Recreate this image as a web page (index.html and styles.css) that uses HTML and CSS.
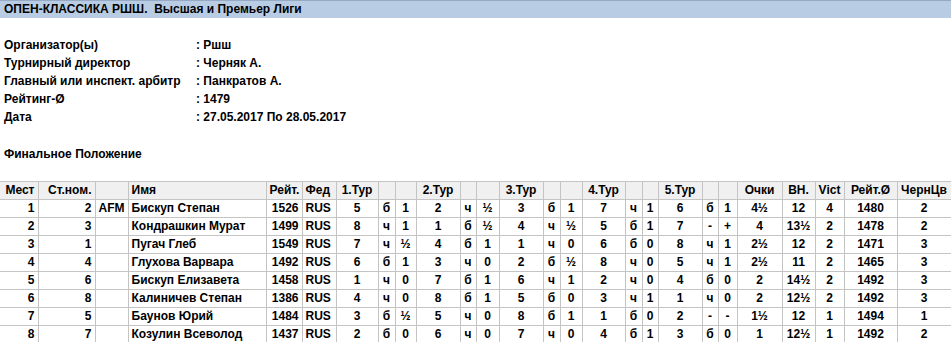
FILE: index.html
```html
<!DOCTYPE html>
<html lang="ru">
<head>
<meta charset="utf-8">
<title>ОПЕН-КЛАССИКА РШШ</title>
<link rel="stylesheet" href="styles.css">
</head>
<body>
<div class="titlebar">ОПЕН-КЛАССИКА РШШ.&nbsp; Высшая и Премьер Лиги</div>
<div class="info">
  <div class="lbl">Организатор(ы)</div><div class="val">: Ршш</div>
  <div class="lbl">Турнирный директор</div><div class="val">: Черняк А.</div>
  <div class="lbl">Главный или инспект. арбитр</div><div class="val">: Панкратов А.</div>
  <div class="lbl">Рейтинг-Ø</div><div class="val">: 1479</div>
  <div class="lbl">Дата</div><div class="val">: 27.05.2017 По 28.05.2017</div>
</div>
<div class="subtitle">Финальное Положение</div>
<table class="standings">
  <colgroup>
    <col style="width:38px"><col style="width:57px"><col style="width:33px"><col style="width:138px"><col style="width:36px"><col style="width:34px">
    <col style="width:42px"><col style="width:17px"><col style="width:21px">
    <col style="width:44px"><col style="width:16px"><col style="width:23px">
    <col style="width:44px"><col style="width:17px"><col style="width:22px">
    <col style="width:43px"><col style="width:17px"><col style="width:16px">
    <col style="width:44px"><col style="width:16px"><col style="width:19px">
    <col style="width:45px"><col style="width:33px"><col style="width:29px"><col style="width:53px"><col style="width:54px">
  </colgroup>
  <thead>
    <tr>
      <th class="r first">Мест</th><th class="r">Ст.ном.</th><th></th><th class="l">Имя</th><th class="r">Рейт.</th><th class="l">Фед</th>
      <th>1.Тур</th><th></th><th></th>
      <th>2.Тур</th><th></th><th></th>
      <th>3.Тур</th><th></th><th></th>
      <th>4.Тур</th><th></th><th></th>
      <th>5.Тур</th><th></th><th></th>
      <th>Очки</th><th>ВН.</th><th>Vict</th><th>Рейт.Ø</th><th>ЧернЦв</th>
    </tr>
  </thead>
  <tbody>
    <tr><td class="r first">1</td><td class="r">2</td><td>AFM</td><td class="l">Бискуп Степан</td><td class="r">1526</td><td class="l">RUS</td>
      <td>5</td><td>б</td><td>1</td><td>2</td><td>ч</td><td>½</td><td>3</td><td>б</td><td>1</td><td>7</td><td>ч</td><td>1</td><td>6</td><td>б</td><td>1</td>
      <td>4½</td><td>12</td><td>4</td><td>1480</td><td>2</td></tr>
    <tr><td class="r first">2</td><td class="r">3</td><td></td><td class="l">Кондрашкин Мурат</td><td class="r">1499</td><td class="l">RUS</td>
      <td>8</td><td>ч</td><td>1</td><td>1</td><td>б</td><td>½</td><td>4</td><td>ч</td><td>½</td><td>5</td><td>б</td><td>1</td><td>7</td><td>-</td><td>+</td>
      <td>4</td><td>13½</td><td>2</td><td>1478</td><td>2</td></tr>
    <tr><td class="r first">3</td><td class="r">1</td><td></td><td class="l">Пугач Глеб</td><td class="r">1549</td><td class="l">RUS</td>
      <td>7</td><td>ч</td><td>½</td><td>4</td><td>б</td><td>1</td><td>1</td><td>ч</td><td>0</td><td>6</td><td>б</td><td>0</td><td>8</td><td>ч</td><td>1</td>
      <td>2½</td><td>12</td><td>2</td><td>1471</td><td>3</td></tr>
    <tr><td class="r first">4</td><td class="r">4</td><td></td><td class="l">Глухова Варвара</td><td class="r">1492</td><td class="l">RUS</td>
      <td>6</td><td>б</td><td>1</td><td>3</td><td>ч</td><td>0</td><td>2</td><td>б</td><td>½</td><td>8</td><td>ч</td><td>0</td><td>5</td><td>ч</td><td>1</td>
      <td>2½</td><td>11</td><td>2</td><td>1465</td><td>3</td></tr>
    <tr><td class="r first">5</td><td class="r">6</td><td></td><td class="l">Бискуп Елизавета</td><td class="r">1458</td><td class="l">RUS</td>
      <td>1</td><td>ч</td><td>0</td><td>7</td><td>б</td><td>1</td><td>6</td><td>ч</td><td>1</td><td>2</td><td>ч</td><td>0</td><td>4</td><td>б</td><td>0</td>
      <td>2</td><td>14½</td><td>2</td><td>1492</td><td>3</td></tr>
    <tr><td class="r first">6</td><td class="r">8</td><td></td><td class="l">Калиничев Степан</td><td class="r">1386</td><td class="l">RUS</td>
      <td>4</td><td>ч</td><td>0</td><td>8</td><td>б</td><td>1</td><td>5</td><td>б</td><td>0</td><td>3</td><td>ч</td><td>1</td><td>1</td><td>ч</td><td>0</td>
      <td>2</td><td>12½</td><td>2</td><td>1492</td><td>3</td></tr>
    <tr><td class="r first">7</td><td class="r">5</td><td></td><td class="l">Баунов Юрий</td><td class="r">1484</td><td class="l">RUS</td>
      <td>3</td><td>б</td><td>½</td><td>5</td><td>ч</td><td>0</td><td>8</td><td>б</td><td>1</td><td>1</td><td>б</td><td>0</td><td>2</td><td>-</td><td>-</td>
      <td>1½</td><td>12</td><td>1</td><td>1494</td><td>1</td></tr>
    <tr><td class="r first">8</td><td class="r">7</td><td></td><td class="l">Козулин Всеволод</td><td class="r">1437</td><td class="l">RUS</td>
      <td>2</td><td>б</td><td>0</td><td>6</td><td>ч</td><td>0</td><td>7</td><td>ч</td><td>0</td><td>4</td><td>б</td><td>1</td><td>3</td><td>б</td><td>0</td>
      <td>1</td><td>12½</td><td>1</td><td>1492</td><td>2</td></tr>
  </tbody>
</table>
</body>
</html>
```
FILE: styles.css
```css
html, body {
  margin: 0;
  padding: 0;
  background: #ffffff;
}
body {
  font-family: "Liberation Sans", Arial, sans-serif;
  font-size: 12px;
  font-weight: bold;
  color: #000000;
}
.titlebar {
  box-sizing: border-box;
  height: 18px;
  line-height: 16px;
  padding-left: 4px;
  background: #b8cce4;
  border-top: 1px solid #95a8c4;
  white-space: pre;
}
.info {
  display: grid;
  grid-template-columns: 192px auto;
  grid-auto-rows: 18px;
  line-height: 18px;
  margin-top: 18px;
  padding-left: 4px;
}
.subtitle {
  margin-top: 19px;
  height: 18px;
  line-height: 18px;
  padding-left: 4px;
}
.standings {
  margin-top: 18px;
  border-collapse: collapse;
  table-layout: fixed;
  width: 951px;
}
.standings th,
.standings td {
  border: 1px solid #c4c4c4;
  padding: 0 3px;
  height: 17px;
  line-height: 17px;
  text-align: center;
  white-space: nowrap;
  overflow: hidden;
  font-weight: bold;
  box-sizing: border-box;
}
.standings th {
  background: #f0f0f0;
}
.standings .first {
  border-left: none;
}
.standings .r {
  text-align: right;
}
.standings .l {
  text-align: left;
}
```
